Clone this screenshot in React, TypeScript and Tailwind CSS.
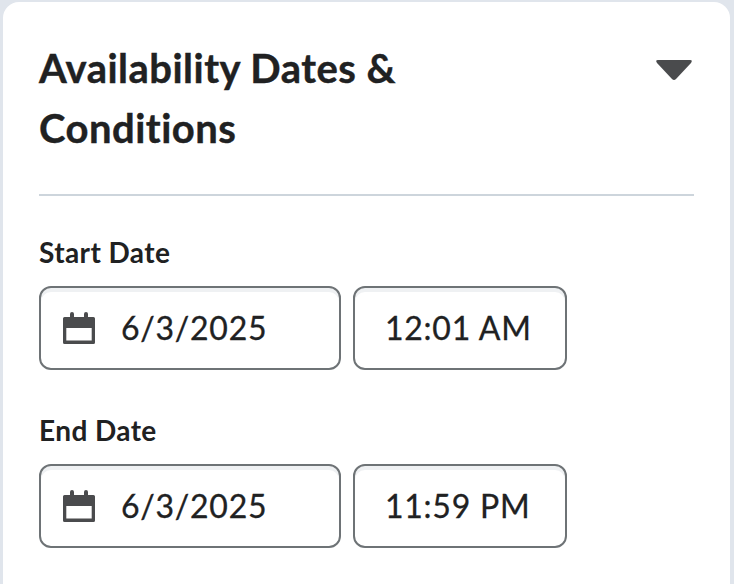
import React from "react";

function CalendarIcon() {
  return (
    <svg width="32" height="32" viewBox="0 0 32 32" className="shrink-0">
      <path
        fill="#4a4b4d"
        fillRule="evenodd"
        d="M1.500 5H7V2a2 2 0 0 1 4 0V5h10V2a2 2 0 0 1 4 0V5h5.500a1.500 1.500 0 0 1 1.500 1.500v24a1.500 1.500 0 0 1-1.500 1.500h-29a1.500 1.500 0 0 1-1.500-1.500v-24A1.500 1.500 0 0 1 1.500 5zM3.300 16v12.600h25.400V16z"
      />
    </svg>
  );
}

function DateRow({ label, date, time }: { label: string; date: string; time: string }) {
  return (
    <div>
      <p className="text-[28px] leading-9 font-bold tracking-[0.4px]">{label}</p>
      <div className="mt-4 flex gap-3">
        <div className="flex h-[84px] w-[302px] items-center gap-[26px] rounded-[12px] border-2 border-[#6e7376] pl-[22px] shadow-[inset_0_4px_0_#eff1f3]">
          <CalendarIcon />
          <span className="text-[32px] tracking-[0.75px] [-webkit-text-stroke:0.3px_#202122]">{date}</span>
        </div>
        <div className="flex h-[84px] w-[214px] items-center rounded-[12px] border-2 border-[#6e7376] pl-[30px] shadow-[inset_0_4px_0_#eff1f3]">
          <span className="text-[32px] tracking-[0.75px] whitespace-nowrap [-webkit-text-stroke:0.3px_#202122]">{time}</span>
        </div>
      </div>
    </div>
  );
}

export default function App() {
  return (
    <div className="h-[584px] w-full overflow-hidden bg-[#e0e5ec] pt-0.5 pr-1 pl-[3px] font-['Lato',sans-serif] text-[#202122]">
      <div className="h-[620px] rounded-[16px] bg-white pt-9 pr-9 pl-9">
        <div className="flex justify-between border-b-2 border-[#cdd5dc] pb-9">
          <h2 className="w-[400px] text-[40px] leading-[60px] font-bold tracking-[0.48px] [-webkit-text-stroke:0.4px_#202122]">Availability Dates & Conditions</h2>
          <svg width="36" height="20" viewBox="0 0 36 20" className="mt-[22px] mr-[2px]">
            <path fill="#4a4b4d" d="M2 0h32q3 0 1 3L20 19q-2 2-4 0L1 3q-2-3 1-3z" />
          </svg>
        </div>
        <div className="mt-[38px] flex flex-col gap-[42px]">
          <DateRow label="Start Date" date="6/3/2025" time="12:01 AM" />
          <DateRow label="End Date" date="6/3/2025" time="11:59 PM" />
        </div>
      </div>
    </div>
  );
}
